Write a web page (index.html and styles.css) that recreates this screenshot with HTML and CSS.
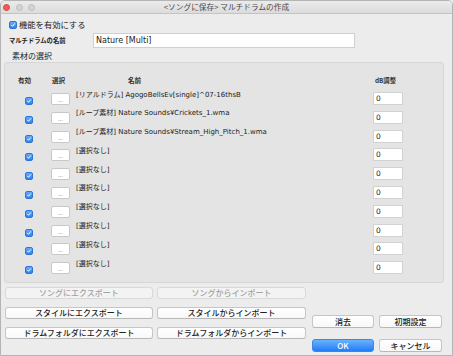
FILE: index.html
```html
<!DOCTYPE html>
<html lang="ja">
<head>
  <meta charset="UTF-8">
  <title>&lt;ソングに保存&gt; マルチドラムの作成</title>
  <link rel="stylesheet" href="styles.css">
</head>
<body>
  <div class="window">
    <div class="titlebar">
      <div class="lights">
        <span class="light red"></span>
        <span class="light"></span>
        <span class="light"></span>
      </div>
      <div class="title">&lt;ソングに保存&gt; マルチドラムの作成</div>
      <div></div>
    </div>

    <div class="enable-row">
      <span class="check"><svg viewBox="0 0 8 8"><path d="M2 4.2 L3.4 5.7 L6 2.4" /></svg></span>
      <span class="enable-label">機能を有効にする</span>
    </div>

    <div class="name-row">
      <span class="name-label">マルチドラムの名前</span>
      <div class="text-field">Nature [Multi]</div>
    </div>

    <div class="section-label">素材の選択</div>

    <div class="group">
      <div class="row head">
        <div class="c-en">有効</div>
        <div class="c-sel">選択</div>
        <div class="c-name">名前</div>
        <div class="c-db">dB調整</div>
      </div>
      <div class="row">
        <div class="c-en"><span class="check"><svg viewBox="0 0 8 8"><path d="M2 4.2 L3.4 5.7 L6 2.4" /></svg></span></div>
        <div class="c-sel"><span class="pick">...</span></div>
        <div class="c-name">[リアルドラム] AgogoBellsEv[single]^07-16thsB</div>
        <div class="c-db"><span class="db">0</span></div>
      </div>
      <div class="row">
        <div class="c-en"><span class="check"><svg viewBox="0 0 8 8"><path d="M2 4.2 L3.4 5.7 L6 2.4" /></svg></span></div>
        <div class="c-sel"><span class="pick">...</span></div>
        <div class="c-name">[ループ素材] Nature Sounds¥Crickets_1.wma</div>
        <div class="c-db"><span class="db">0</span></div>
      </div>
      <div class="row">
        <div class="c-en"><span class="check"><svg viewBox="0 0 8 8"><path d="M2 4.2 L3.4 5.7 L6 2.4" /></svg></span></div>
        <div class="c-sel"><span class="pick">...</span></div>
        <div class="c-name">[ループ素材] Nature Sounds¥Stream_High_Pitch_1.wma</div>
        <div class="c-db"><span class="db">0</span></div>
      </div>
      <div class="row">
        <div class="c-en"><span class="check"><svg viewBox="0 0 8 8"><path d="M2 4.2 L3.4 5.7 L6 2.4" /></svg></span></div>
        <div class="c-sel"><span class="pick">...</span></div>
        <div class="c-name">[選択なし]</div>
        <div class="c-db"><span class="db">0</span></div>
      </div>
      <div class="row">
        <div class="c-en"><span class="check"><svg viewBox="0 0 8 8"><path d="M2 4.2 L3.4 5.7 L6 2.4" /></svg></span></div>
        <div class="c-sel"><span class="pick">...</span></div>
        <div class="c-name">[選択なし]</div>
        <div class="c-db"><span class="db">0</span></div>
      </div>
      <div class="row">
        <div class="c-en"><span class="check"><svg viewBox="0 0 8 8"><path d="M2 4.2 L3.4 5.7 L6 2.4" /></svg></span></div>
        <div class="c-sel"><span class="pick">...</span></div>
        <div class="c-name">[選択なし]</div>
        <div class="c-db"><span class="db">0</span></div>
      </div>
      <div class="row">
        <div class="c-en"><span class="check"><svg viewBox="0 0 8 8"><path d="M2 4.2 L3.4 5.7 L6 2.4" /></svg></span></div>
        <div class="c-sel"><span class="pick">...</span></div>
        <div class="c-name">[選択なし]</div>
        <div class="c-db"><span class="db">0</span></div>
      </div>
      <div class="row">
        <div class="c-en"><span class="check"><svg viewBox="0 0 8 8"><path d="M2 4.2 L3.4 5.7 L6 2.4" /></svg></span></div>
        <div class="c-sel"><span class="pick">...</span></div>
        <div class="c-name">[選択なし]</div>
        <div class="c-db"><span class="db">0</span></div>
      </div>
      <div class="row">
        <div class="c-en"><span class="check"><svg viewBox="0 0 8 8"><path d="M2 4.2 L3.4 5.7 L6 2.4" /></svg></span></div>
        <div class="c-sel"><span class="pick">...</span></div>
        <div class="c-name">[選択なし]</div>
        <div class="c-db"><span class="db">0</span></div>
      </div>
      <div class="row">
        <div class="c-en"><span class="check"><svg viewBox="0 0 8 8"><path d="M2 4.2 L3.4 5.7 L6 2.4" /></svg></span></div>
        <div class="c-sel"><span class="pick">...</span></div>
        <div class="c-name">[選択なし]</div>
        <div class="c-db"><span class="db">0</span></div>
      </div>
    </div>

    <div class="bottom">
      <div class="io-buttons">
        <button class="btn" disabled>ソングにエクスポート</button>
        <button class="btn" disabled>ソングからインポート</button>
        <button class="btn">スタイルにエクスポート</button>
        <button class="btn">スタイルからインポート</button>
        <button class="btn">ドラムフォルダにエクスポート</button>
        <button class="btn">ドラムフォルダからインポート</button>
      </div>
      <div class="main-buttons">
        <button class="btn">消去</button>
        <button class="btn">初期設定</button>
        <button class="btn primary">OK</button>
        <button class="btn">キャンセル</button>
      </div>
    </div>
  </div>
</body>
</html>
```

FILE: styles.css
```css
* {
  box-sizing: border-box;
}
html, body {
  margin: 0;
  padding: 0;
  background: #ececec;
}
body {
  font-family: "DejaVu Sans", "Noto Sans CJK JP", sans-serif;
  color: #222;
}
.window {
  width: 453px;
  height: 356px;
  border: 1px solid #b4b4b4;
  border-radius: 5px 5px 0 0;
  background: #ececec;
  overflow: hidden;
}
.titlebar {
  height: 13px;
  display: grid;
  grid-template-columns: 1fr auto 1fr;
  align-items: center;
  background: linear-gradient(#ebebeb, #dcdcdc);
  border-bottom: 1px solid #c4c4c4;
}
.lights {
  display: flex;
  gap: 5.5px;
  padding-left: 2px;
}
.light {
  width: 7px;
  height: 7px;
  border-radius: 50%;
  background: #d3d3d3;
  border: 0.5px solid #bdbdbd;
}
.light.red {
  background: #f25b54;
  border-color: #d9453f;
}
.title {
  font-family: "Noto Sans CJK JP", sans-serif;
  font-size: 7.7px;
  color: #4a4a4a;
  line-height: 12px;
}

.check {
  display: inline-flex;
  width: 8px;
  height: 8px;
  border-radius: 2px;
  background: linear-gradient(#68a9f8, #2f82f1);
  border: 0.5px solid #2b74d8;
}
.check svg {
  width: 100%;
  height: 100%;
  fill: none;
  stroke: #fff;
  stroke-width: 1.3;
  stroke-linecap: round;
  stroke-linejoin: round;
}

.enable-row {
  display: flex;
  align-items: center;
  gap: 2px;
  height: 9px;
  margin-top: 6px;
  padding-left: 8px;
}
.enable-label {
  font-family: "Noto Sans CJK JP", sans-serif;
  font-size: 8.3px;
  line-height: 9px;
}

.name-row {
  display: flex;
  align-items: center;
  height: 15px;
  margin-top: 4px;
  padding-left: 8px;
}
.name-label {
  width: 84px;
  font-family: "Noto Sans CJK JP", sans-serif;
  font-weight: 700;
  font-size: 6.3px;
}
.text-field {
  width: 262px;
  height: 15px;
  background: #fff;
  border: 1px solid #cfcfcf;
  font-size: 8px;
  line-height: 13px;
  padding-left: 2px;
}

.section-label {
  height: 10px;
  margin-top: 3px;
  padding-left: 11px;
  font-family: "Noto Sans CJK JP", sans-serif;
  font-size: 8px;
  line-height: 10px;
}

.group {
  width: 440px;
  height: 221px;
  margin: 1px 0 0 3px;
  padding-top: 11px;
  background: #e4e4e4;
  border: 1px solid #d6d6d6;
  border-radius: 3px;
}
.row {
  display: flex;
  align-items: flex-start;
  height: 18.8px;
}
.c-en {
  width: 41px;
}
.c-sel {
  width: 27px;
}
.c-name {
  width: 300px;
  margin-top: 1.5px;
  padding-left: 3px;
  font-size: 7px;
  line-height: 9px;
  white-space: nowrap;
}
.c-db {
  width: 30px;
}

.row.head {
  height: 12px;
  margin-bottom: 3px;
  align-items: center;
  font-family: "Noto Sans CJK JP", sans-serif;
  font-weight: 700;
  font-size: 6.6px;
  color: #333;
}
.head .c-en { padding-left: 13px; }
.head .c-sel { padding-left: 6px; }
.head .c-name {
  margin-top: 0;
  padding-left: 55px;
  font-size: 6.6px;
}
.head .c-db { padding-left: 2px; font-size: 6.3px; }

.row .c-en .check {
  margin: 7px 0 0 20px;
}
.pick {
  display: block;
  width: 19px;
  height: 12px;
  margin: 4px 0 0 5px;
  background: #fff;
  border: 1px solid #c8c8c8;
  border-radius: 2px;
  font-size: 5px;
  line-height: 12px;
  text-align: center;
  color: #444;
}
.db {
  display: block;
  width: 30px;
  height: 13px;
  margin-top: 3px;
  background: #fff;
  border: 1px solid #d2d2d2;
  font-size: 7.5px;
  line-height: 11px;
  padding-left: 2px;
}

.bottom {
  display: flex;
  align-items: flex-start;
  margin-top: 4px;
  padding-left: 4px;
}
.io-buttons {
  display: grid;
  grid-template-columns: 148px 149px;
  grid-auto-rows: 12px;
  column-gap: 4px;
  row-gap: 8px;
}
.main-buttons {
  display: grid;
  grid-template-columns: 62px 63px;
  grid-auto-rows: 13px;
  column-gap: 5px;
  row-gap: 11px;
  margin: 28px 0 0 6px;
}
.btn {
  margin: 0;
  padding: 0;
  font-family: "Noto Sans CJK JP", sans-serif;
  font-size: 8px;
  font-weight: 500;
  line-height: 10px;
  color: #222;
  background: linear-gradient(#fff, #f8f8f8);
  border: 1px solid #c6c6c6;
  border-bottom-color: #b8b8b8;
  border-radius: 3px;
}
.btn:disabled {
  color: #a2a2a2;
  background: #f3f3f3;
  border-color: #d9d9d9;
}
.btn.primary {
  color: #fff;
  background: linear-gradient(#6cb2fb, #207ef7);
  border-color: #3a86ec;
}
```
